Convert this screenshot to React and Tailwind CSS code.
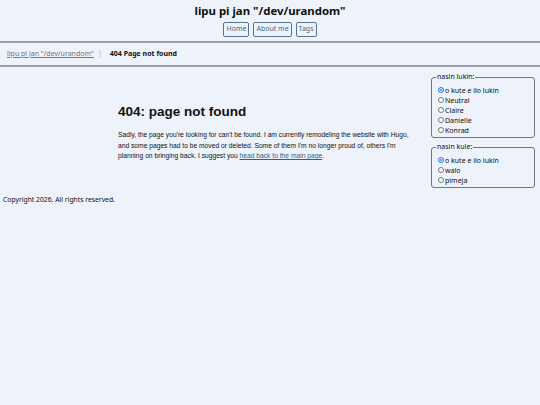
import React from "react";

function Radio({ checked, label }) {
  return (
    <label className="flex items-center h-[10px] leading-none">
      <span
        className={
          "inline-block w-[6px] h-[6px] rounded-full border mr-[1px] " +
          (checked ? "border-[#3b82f6] bg-[#3b82f6] shadow-[inset_0_0_0_1px_#fff]" : "border-[#767676] bg-white")
        }
      ></span>
      <span>{label}</span>
    </label>
  );
}

function Fieldset({ legend, items }) {
  return (
    <fieldset className="border border-[#767676] rounded-[3px] px-[6px] pt-0 pb-[2px] w-[104px] text-[7px]">
      <legend className="px-[1px] -ml-[2px] leading-[8px] text-[7px]">{legend}</legend>
      <div className="flex flex-col pt-[4px]">
        {items.map((it, i) => (
          <Radio key={i} checked={i === 0} label={it} />
        ))}
      </div>
    </fieldset>
  );
}

export default function App() {
  const sans = { fontFamily: '"Noto Sans", "Open Sans", sans-serif' };
  const arial = { fontFamily: '"Liberation Sans", Arial, sans-serif' };
  return (
    <div className="min-h-[405px] bg-[#edf2fb] text-[#111]" style={sans}>
      <header className="flex flex-col items-center pt-[2px] pb-[4px] border-b-2 border-[#9a9ea6]">
        <h1 className="text-[11.4px] font-bold leading-[17px]">lipu pi jan "/dev/urandom"</h1>
        <nav className="flex gap-[4px] mt-[3px]">
          {["Home", "About me", "Tags"].map((t) => (
            <a
              key={t}
              className="border border-[#557593] rounded-[2px] px-[2px] h-[15px] flex items-center text-[7px] text-[#4a6a88]"
            >
              {t}
            </a>
          ))}
        </nav>
      </header>
      <div className="flex items-center h-[24px] px-[7px] border-b-2 border-[#9a9ea6] text-[7px]">
        <a className="underline text-[#777]">lipu pi jan "/dev/urandom"</a>
        <span className="mx-[4px] text-[#777] text-[8px]">〉</span>
        <span className="font-bold">404 Page not found</span>
      </div>
      <div className="grid grid-cols-[118px_300px_1fr]">
        <div></div>
        <main className="pt-[37px]" style={arial}>
          <h2 className="text-[13.5px] font-bold leading-[16px]">404: page not found</h2>
          <p className="mt-[10px] text-[6.7px] leading-[10.5px] whitespace-nowrap">
            Sadly, the page you're looking for can't be found. I am currently remodeling the website with Hugo,
            <br />
            and some pages had to be moved or deleted. Some of them I'm no longer proud of, others I'm
            <br />
            planning on bringing back. I suggest you{" "}
            <a className="underline text-[#2c5f8a]">head back to the main page</a>.
          </p>
        </main>
        <aside className="flex flex-col items-end pr-[5px] pt-[6px] gap-[5px]">
          <Fieldset legend="nasin lukin:" items={["o kute e ilo lukin", "Neutral", "Claire", "Danielle", "Konrad"]} />
          <Fieldset legend="nasin kule:" items={["o kute e ilo lukin", "walo", "pimeja"]} />
        </aside>
      </div>
      <footer className="px-[3px] pt-[7px] text-[6.8px]">Copyright 2026. All rights reserved.</footer>
    </div>
  );
}
